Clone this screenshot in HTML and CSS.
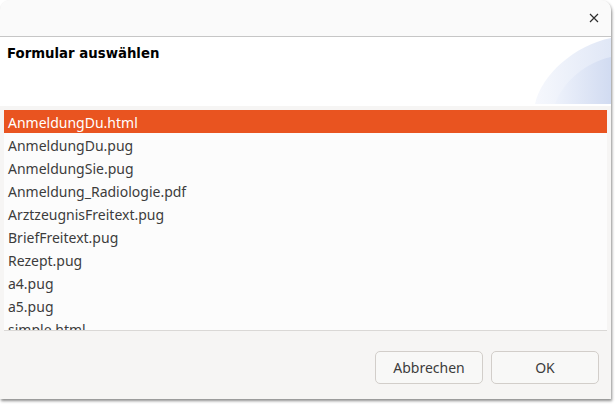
FILE: index.html
```html
<!DOCTYPE html>
<html lang="de">
<head>
<meta charset="utf-8">
<link rel="stylesheet" href="styles.css">
</head>
<body>
<div class="window">
  <div class="titlebar">
    <span class="close" aria-label="Schließen">
      <svg width="10" height="10" viewBox="0 0 10 10"><path d="M1 1L9 9M9 1L1 9" stroke="#2e2e2e" stroke-width="1.2" fill="none"/></svg>
    </span>
  </div>
  <div class="header">
    <h1 class="title">Formular auswählen</h1>
    <svg class="deco" width="76" height="69" viewBox="0 0 76 69">
      <defs>
        <linearGradient id="g1" x1="0" y1="0" x2="1" y2="0">
          <stop offset="0" stop-color="#f6f8fd"/>
          <stop offset="1" stop-color="#e0e7f6"/>
        </linearGradient>
        <linearGradient id="g2" x1="0" y1="0" x2="1" y2="0">
          <stop offset="0" stop-color="#eef2fb"/>
          <stop offset="1" stop-color="#d1dbf1"/>
        </linearGradient>
      </defs>
      <path d="M0 67 C6 38 40 8 76 1 L76 67 Z" fill="url(#g1)"/>
      <path d="M20 67 C28 44 52 25 76 20 L76 67 Z" fill="url(#g2)"/>
    </svg>
  </div>
  <div class="content">
    <ul class="list">
      <li class="row selected">AnmeldungDu.html</li>
      <li class="row">AnmeldungDu.pug</li>
      <li class="row">AnmeldungSie.pug</li>
      <li class="row">Anmeldung_Radiologie.pdf</li>
      <li class="row">ArztzeugnisFreitext.pug</li>
      <li class="row">BriefFreitext.pug</li>
      <li class="row">Rezept.pug</li>
      <li class="row">a4.pug</li>
      <li class="row">a5.pug</li>
      <li class="row">simple.html</li>
    </ul>
    <div class="actions">
      <button class="btn">Abbrechen</button>
      <button class="btn">OK</button>
    </div>
  </div>
</div>
</body>
</html>
```
FILE: styles.css
```css
html, body {
  margin: 0;
  padding: 0;
  background: #ffffff;
}
body {
  width: 615px;
  height: 405px;
  overflow: hidden;
  font-family: "Noto Sans", "Open Sans", sans-serif;
}
.window {
  width: 611px;
  height: 399px;
  border-radius: 10px 10px 0 0;
  background: #f6f5f4;
  box-shadow: 1px 2px 3px rgba(0, 0, 0, 0.45);
  display: flex;
  flex-direction: column;
  overflow: hidden;
}
.titlebar {
  height: 36px;
  flex: none;
  background: #fafafa;
  border-bottom: 1px solid #c6c6c6;
  display: flex;
  justify-content: flex-end;
  align-items: center;
  padding-right: 12px;
}
.close {
  width: 10px;
  height: 10px;
  display: flex;
}
.header {
  position: relative;
  height: 69px;
  flex: none;
  background: #ffffff;
}
.title {
  margin: 0;
  padding: 9px 0 0 7px;
  font-family: "DejaVu Sans", sans-serif;
  font-weight: bold;
  font-size: 13.3px;
  line-height: 16px;
  color: #000;
}
.deco {
  position: absolute;
  right: 0;
  top: 0;
}
.content {
  flex: 1;
  display: flex;
  flex-direction: column;
  padding: 4px 4px 0 4px;
}
.list {
  margin: 0;
  padding: 0;
  list-style: none;
  height: 220px;
  overflow: hidden;
  background: #fcfcfc;
  border-bottom: 1px solid #dad8d6;
  flex: none;
}
.row {
  height: 23px;
  line-height: 25px;
  overflow: hidden;
  padding-left: 4px;
  font-size: 14px;
  color: #3c3c3c;
  white-space: nowrap;
}
.row.selected {
  background: #e95420;
  color: #ffffff;
}
.actions {
  display: flex;
  justify-content: flex-end;
  gap: 8px;
  padding: 20px 8px 0 0;
}
.btn {
  width: 108px;
  height: 33px;
  border: 1px solid #d2ceca;
  border-radius: 5px;
  background: #f8f8f7;
  font-family: "Noto Sans", "Open Sans", sans-serif;
  font-size: 14px;
  color: #3c3c3c;
  padding: 0;
}
```
